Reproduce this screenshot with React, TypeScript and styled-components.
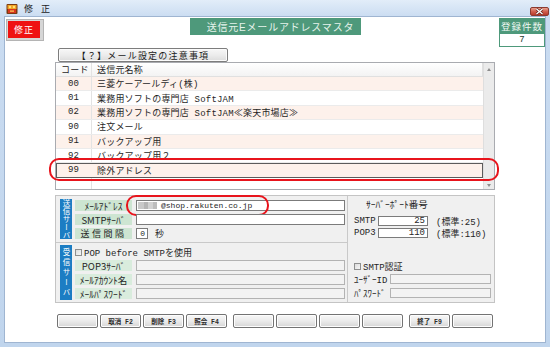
import React from "react";
import styled, { createGlobalStyle } from "styled-components";

const GlobalStyle = createGlobalStyle`
  html, body {
    margin: 0;
    padding: 0;
    overflow: hidden;
    background: #c4d7ee;
  }
  * {
    box-sizing: border-box;
  }
  body {
    font-family: "Liberation Mono", "Noto Sans CJK JP", monospace;
    color: #1f1f1f;
  }
`;

const Window = styled.div`
  width: 550px;
  height: 347px;
  display: flex;
  flex-direction: column;
  background: linear-gradient(180deg, #e2edf9 0px, #cadcf1 17px, #c0d5ed 100%);
`;

const TitleBar = styled.div`
  height: 17px;
  flex-shrink: 0;
  display: flex;
  align-items: center;
  padding: 0 1px 0 6px;
`;

const TitleText = styled.span`
  margin-left: 6px;
  font-family: "Noto Sans CJK JP", sans-serif;
  font-size: 9px;
  letter-spacing: 3px;
  color: #1c1c1c;
`;

const CloseButton = styled.div`
  margin-left: auto;
  margin-top: 6px;
  width: 19px;
  height: 9px;
  border: 1px solid #8a3a30;
  border-radius: 2px;
  background: linear-gradient(180deg, #e9a08f 0%, #d0604e 50%, #b83a2a 100%);
  display: flex;
  align-items: center;
  justify-content: center;
`;

const Client = styled.div`
  flex: 1;
  margin: 0 5px 5px 5px;
  background: #fff;
  display: flex;
  flex-direction: column;
  box-shadow: 0 0 0 1px #9fb5d1;
`;

const TopRow = styled.div`
  height: 31px;
  flex-shrink: 0;
  display: flex;
  align-items: flex-start;
`;

const ModeButton = styled.div`
  margin: 2px 0 0 1px;
  width: 38px;
  height: 22px;
  border: 1px solid #b4b4b4;
  padding: 1px 3px 2px 1px;
  background: #d6d6d6;
  display: flex;
`;

const ModeFace = styled.div`
  flex: 1;
  background: #ef1212;
  color: #fff;
  font-family: "Noto Sans CJK JP", sans-serif;
  font-size: 9px;
  letter-spacing: 1px;
  display: flex;
  align-items: center;
  justify-content: center;
`;

const FormTitle = styled.div`
  margin: 1px 0 0 146px;
  width: 171px;
  height: 17px;
  padding-left: 10px;
  background: #4e997b;
  color: #e6f4ec;
  font-family: "Liberation Sans", "Noto Sans CJK JP", sans-serif;
  font-size: 10px;
  letter-spacing: 0.8px;
  display: flex;
  align-items: center;
  justify-content: center;
`;

const CountBox = styled.div`
  margin: 1px 0 0 auto;
  width: 46px;
  display: flex;
  flex-direction: column;
`;

const CountHead = styled.div`
  height: 16px;
  background: #4e997b;
  color: #eef8f2;
  font-family: "Noto Sans CJK JP", sans-serif;
  font-size: 9.5px;
  letter-spacing: 1px;
  display: flex;
  align-items: center;
  justify-content: center;
`;

const CountValue = styled.div`
  height: 13px;
  border: 1px solid #4e997b;
  border-top: none;
  font-size: 9px;
  color: #1d3a2c;
  display: flex;
  align-items: center;
  justify-content: center;
`;

const Body = styled.div`
  margin-left: 50px;
  width: 440px;
  display: flex;
  flex-direction: column;
`;

const NoticeButton = styled.div`
  margin-left: 3px;
  width: 170px;
  height: 14px;
  border: 1px solid #7d7d7d;
  border-radius: 2px;
  background: linear-gradient(180deg, #f7f7f7 0%, #ececec 50%, #dcdcdc 100%);
  box-shadow: inset 0 0 0 1px #fbfbfb;
  font-family: "Noto Sans CJK JP", sans-serif;
  font-size: 9px;
  letter-spacing: 1.2px;
  color: #1a1a1a;
  display: flex;
  align-items: center;
  justify-content: center;
`;

const List = styled.div`
  position: relative;
  height: 128px;
  flex-shrink: 0;
  border: 1px solid #a9abb0;
  background: #fff;
  display: flex;
`;

const Grid = styled.div`
  flex: 1;
  display: flex;
  flex-direction: column;
  font-size: 9px;
  letter-spacing: 0.2px;
`;

const CodeCell = styled.div`
  width: 36px;
  flex-shrink: 0;
  border-right: 1px solid #e3e3e3;
  display: flex;
  align-items: center;
  justify-content: center;
`;

const NameCell = styled.div`
  flex: 1;
  padding-left: 5px;
  display: flex;
  align-items: center;
  white-space: nowrap;
`;

const HeaderRow = styled.div`
  height: 14px;
  flex-shrink: 0;
  display: flex;
  background: linear-gradient(180deg, #ffffff 0%, #f3f3f3 100%);
  border-bottom: 1px solid #e0e0e0;
  border-right: 1px solid #e0e0e0;

  ${CodeCell} {
    justify-content: flex-start;
    padding-left: 5px;
  }
`;

const Row = styled.div<{ $pink?: boolean; $selected?: boolean }>`
  height: 14.4px;
  flex-shrink: 0;
  display: flex;
  background: ${(p) => (p.$pink ? "#fdf1eb" : "#ffffff")};
  border-bottom: 1px solid #ebebeb;
  outline: ${(p) => (p.$selected ? "1px solid #5c5c5c" : "none")};
  outline-offset: -1px;

  ${CodeCell} {
    border-right-color: ${(p) => (p.$selected ? "transparent" : "#e3e3e3")};
  }
`;

const Filler = styled.div`
  flex: 1;
  display: flex;
`;

const ScrollBar = styled.div`
  width: 11px;
  flex-shrink: 0;
  background: #ebebeb;
  border-left: 1px solid #dedede;
  display: flex;
  flex-direction: column;
  justify-content: space-between;
  align-items: center;
  padding: 5px 0 2px;
`;

const Arrow = styled.div<{ $down?: boolean }>`
  width: 0;
  height: 0;
  border-left: 2.5px solid transparent;
  border-right: 2.5px solid transparent;
  border-top: ${(p) => (p.$down ? "3px solid #8c8c8c" : "none")};
  border-bottom: ${(p) => (p.$down ? "none" : "3px solid #8c8c8c")};
`;

const Highlight = styled.div`
  position: absolute;
  border: 2px solid #e8141c;
  border-radius: 10px;
  pointer-events: none;
`;

const RowHighlight = styled(Highlight)`
  left: -7px;
  top: 95px;
  width: 450px;
  height: 23px;
`;

const AddressHighlight = styled(Highlight)`
  left: -11px;
  top: -6px;
  width: 143px;
  height: 21px;
`;

const Lower = styled.div`
  margin-top: 5px;
  height: 108px;
  flex-shrink: 0;
  background: #f0f0f0;
  border: 1px solid #c4c4c4;
  display: grid;
  grid-template-columns: 292px 1fr;
  grid-template-rows: 47px 1fr;
`;

const ServerPanel = styled.div<{ $top?: boolean }>`
  grid-column: 1;
  display: flex;
  border-right: 1px solid #c9c9c9;
  border-bottom: ${(p) => (p.$top ? "1px solid #c9c9c9" : "none")};
  padding: ${(p) => (p.$top ? "3px 0 0 4px" : "2px 0 0 4px")};
`;

const Tab = styled.div<{ $tall?: boolean }>`
  width: 12px;
  height: ${(p) => (p.$tall ? 55 : 40)}px;
  flex-shrink: 0;
  background: #1c7dc3;
  color: #fff;
  font-family: "Noto Sans CJK JP", sans-serif;
  font-size: 7.5px;
  line-height: 12px;
  letter-spacing: ${(p) => (p.$tall ? 2.5 : 0.5)}px;
  writing-mode: vertical-rl;
  text-orientation: upright;
  display: flex;
  align-items: center;
  justify-content: center;
`;

const Fields = styled.div<{ $top?: boolean }>`
  margin: ${(p) => (p.$top ? "1px 0 0 3px" : "2px 0 0 3px")};
  display: flex;
  flex-direction: column;
  gap: 3px;
`;

const FieldRow = styled.div`
  height: 11px;
  display: flex;
  align-items: center;
`;

const FieldLabel = styled.div<{ $dim?: boolean }>`
  width: 57px;
  height: 11px;
  flex-shrink: 0;
  margin-right: 4px;
  background: ${(p) => (p.$dim ? "#d9ecdd" : "#cde5d2")};
  color: #262626;
  font-family: "Noto Sans CJK JP", sans-serif;
  font-size: 9.5px;
  display: flex;
  align-items: center;
  justify-content: center;
  white-space: nowrap;
`;

const WideLabel = styled(FieldLabel)`
  letter-spacing: 2.5px;
  font-size: 9px;
`;

const TextBox = styled.div<{ $w: number; $dim?: boolean; $right?: boolean }>`
  position: relative;
  width: ${(p) => p.$w}px;
  height: 11px;
  flex-shrink: 0;
  border: 1px solid ${(p) => (p.$dim ? "#b3b3b3" : "#7b7b7b")};
  background: ${(p) => (p.$dim ? "#f3f3f3" : "#ffffff")};
  font-size: 8px;
  display: flex;
  align-items: center;
  justify-content: ${(p) => (p.$right ? "flex-end" : "flex-start")};
  padding: 0 2px 0 1px;
  white-space: nowrap;
`;

const Masked = styled.span`
  width: 19px;
  height: 7px;
  margin-right: 4px;
  background: linear-gradient(90deg, #c9c9c9 0 30%, #b5b5b5 30% 55%, #d2d2d2 55% 80%, #bdbdbd 80%);
`;

const Unit = styled.span`
  margin-left: 7px;
  font-family: "Noto Sans CJK JP", sans-serif;
  font-size: 9px;
`;

const CheckRow = styled.div`
  height: 10px;
  display: flex;
  align-items: center;
  font-size: 9px;
  white-space: nowrap;
`;

const Check = styled.span`
  width: 7px;
  height: 7px;
  margin-right: 2px;
  border: 1px solid #8e8f8f;
  background: linear-gradient(135deg, #dcdcdc, #f6f6f6);
`;

const SideGroup = styled.div`
  grid-column: 2;
  grid-row: 1 / span 2;
  padding: 3px 0 0 6px;
  display: flex;
  flex-direction: column;
  font-size: 9px;
`;

const SideHeading = styled.div`
  height: 10px;
  margin-left: 12px;
  display: flex;
  align-items: center;
  font-size: 9.5px;
`;

const SideRow = styled.div<{ $gap: number }>`
  height: 10px;
  margin-top: ${(p) => p.$gap}px;
  display: flex;
  align-items: center;
  white-space: nowrap;
`;

const SideLabel = styled.span<{ $w: number }>`
  width: ${(p) => p.$w}px;
  flex-shrink: 0;
  font-size: 9px;
`;

const SideBox = styled(TextBox)`
  height: 10px;
  font-size: 9px;
`;

const Note = styled.span`
  margin-left: 8px;
`;

const FnBar = styled.div`
  margin-top: 11px;
  padding-left: 2px;
  display: flex;
  gap: 6px;
`;

const FnGroup = styled.div`
  display: flex;
  gap: 2px;
`;

const FnButton = styled.div`
  width: 41px;
  height: 14px;
  border: 1px solid #737373;
  border-radius: 2px;
  background: linear-gradient(180deg, #f7f7f7 0%, #ebebeb 50%, #d6d6d6 100%);
  box-shadow: inset 0 0 0 1px #fdfdfd;
  font-size: 6.5px;
  font-weight: bold;
  color: #2b2b2b;
  display: flex;
  align-items: center;
  justify-content: center;
  white-space: pre;
`;

const rows = [
  { code: "00", name: "三菱ケーアールディ(株)" },
  { code: "01", name: "業務用ソフトの専門店 SoftJAM" },
  { code: "02", name: "業務用ソフトの専門店 SoftJAM≪楽天市場店≫" },
  { code: "90", name: "注文メール" },
  { code: "91", name: "バックアップ用" },
  { code: "92", name: "バックアップ用２" },
  { code: "99", name: "除外アドレス" },
];

const fnGroups = [
  ["", "取消 F2", "削除 F3", "照会 F4"],
  ["", "", "", ""],
  ["終了 F9", ""],
];

function AppIcon() {
  return (
    <svg width="12" height="12" viewBox="0 0 12 12">
      <rect x="0.5" y="1" width="11" height="10" rx="1" fill="#7a3a12" />
      <rect x="1.5" y="2" width="9" height="4" fill="#f2a323" />
      <rect x="2" y="6" width="8" height="4" fill="#d8361c" />
      <circle cx="4" cy="4" r="1.2" fill="#ffe27a" />
      <circle cx="8" cy="4" r="1.2" fill="#ffe27a" />
      <rect x="4" y="7.5" width="4" height="1.2" fill="#ffd35a" />
    </svg>
  );
}

export default function App() {
  return (
    <>
      <GlobalStyle />
      <Window>
        <TitleBar>
          <AppIcon />
          <TitleText>修 正</TitleText>
          <CloseButton>
            <svg width="9" height="7" viewBox="0 0 9 7">
              <path d="M1.5 1 L7.5 6 M7.5 1 L1.5 6" stroke="#5a1a12" strokeWidth="2.6" />
              <path d="M1.5 1 L7.5 6 M7.5 1 L1.5 6" stroke="#ffffff" strokeWidth="1.4" />
            </svg>
          </CloseButton>
        </TitleBar>
        <Client>
          <TopRow>
            <ModeButton>
              <ModeFace>修正</ModeFace>
            </ModeButton>
            <FormTitle>送信元Eメールアドレスマスタ</FormTitle>
            <CountBox>
              <CountHead>登録件数</CountHead>
              <CountValue>7</CountValue>
            </CountBox>
          </TopRow>
          <Body>
            <NoticeButton>【？】メール設定の注意事項</NoticeButton>
            <List>
              <Grid>
                <HeaderRow>
                  <CodeCell>コード</CodeCell>
                  <NameCell>送信元名称</NameCell>
                </HeaderRow>
                {rows.map((r, i) => (
                  <Row key={r.code} $pink={i % 2 === 0} $selected={r.code === "99"}>
                    <CodeCell>{r.code}</CodeCell>
                    <NameCell>{r.name}</NameCell>
                  </Row>
                ))}
                <Filler>
                  <CodeCell />
                </Filler>
              </Grid>
              <ScrollBar>
                <Arrow />
                <Arrow $down />
              </ScrollBar>
              <RowHighlight />
            </List>
            <Lower>
              <ServerPanel $top>
                <Tab>送信サーバ</Tab>
                <Fields $top>
                  <FieldRow>
                    <FieldLabel>ﾒｰﾙｱﾄﾞﾚｽ</FieldLabel>
                    <TextBox $w={209}>
                      <Masked />
                      @shop.rakuten.co.jp
                      <AddressHighlight />
                    </TextBox>
                  </FieldRow>
                  <FieldRow>
                    <FieldLabel>SMTPｻｰﾊﾞ</FieldLabel>
                    <TextBox $w={209} />
                  </FieldRow>
                  <FieldRow>
                    <WideLabel>送信間隔</WideLabel>
                    <TextBox $w={12} $right>
                      0
                    </TextBox>
                    <Unit>秒</Unit>
                  </FieldRow>
                </Fields>
              </ServerPanel>
              <ServerPanel>
                <Tab $tall>受信サーバ</Tab>
                <Fields>
                  <CheckRow>
                    <Check />
                    POP before SMTPを使用
                  </CheckRow>
                  <FieldRow>
                    <FieldLabel $dim>POP3ｻｰﾊﾞ</FieldLabel>
                    <TextBox $w={209} $dim />
                  </FieldRow>
                  <FieldRow>
                    <FieldLabel $dim>ﾒｰﾙｱｶｳﾝﾄ名</FieldLabel>
                    <TextBox $w={209} $dim />
                  </FieldRow>
                  <FieldRow>
                    <FieldLabel $dim>ﾒｰﾙﾊﾟｽﾜｰﾄﾞ</FieldLabel>
                    <TextBox $w={209} $dim />
                  </FieldRow>
                </Fields>
              </ServerPanel>
              <SideGroup>
                <SideHeading>ｻｰﾊﾞｰﾎﾟｰﾄ番号</SideHeading>
                <SideRow $gap={7}>
                  <SideLabel $w={24}>SMTP</SideLabel>
                  <SideBox $w={50} $right>
                    25
                  </SideBox>
                  <Note>(標準:25)</Note>
                </SideRow>
                <SideRow $gap={2}>
                  <SideLabel $w={24}>POP3</SideLabel>
                  <SideBox $w={50} $right>
                    110
                  </SideBox>
                  <Note>(標準:110)</Note>
                </SideRow>
                <SideRow $gap={23}>
                  <Check />
                  SMTP認証
                </SideRow>
                <SideRow $gap={3}>
                  <SideLabel $w={36}>ﾕｰｻﾞｰID</SideLabel>
                  <SideBox $w={101} $dim />
                </SideRow>
                <SideRow $gap={4}>
                  <SideLabel $w={36}>ﾊﾟｽﾜｰﾄﾞ</SideLabel>
                  <SideBox $w={101} $dim />
                </SideRow>
              </SideGroup>
            </Lower>
            <FnBar>
              {fnGroups.map((g, gi) => (
                <FnGroup key={gi}>
                  {g.map((label, bi) => (
                    <FnButton key={bi}>{label}</FnButton>
                  ))}
                </FnGroup>
              ))}
            </FnBar>
          </Body>
        </Client>
      </Window>
    </>
  );
}
